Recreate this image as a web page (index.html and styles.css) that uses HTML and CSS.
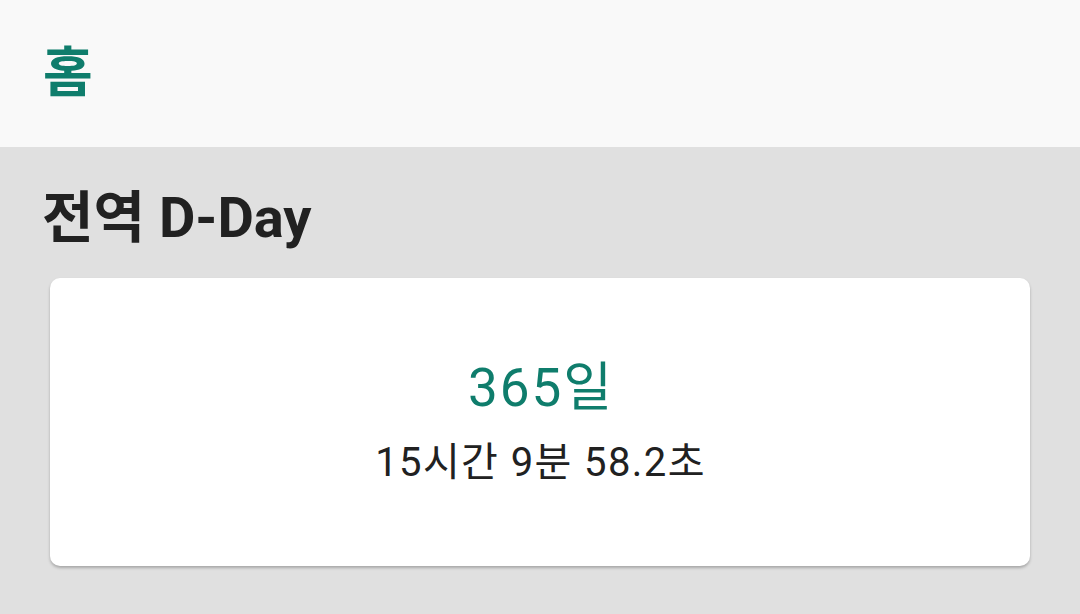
FILE: index.html
```html
<!DOCTYPE html>
<html lang="ko">
<head>
  <meta charset="UTF-8">
  <title>홈</title>
  <link rel="stylesheet" href="styles.css">
</head>
<body>
<header class="app-bar">
  <h1 class="app-bar-title">홈</h1>
</header>
<main class="content">
  <h2 class="section-title">전역 D-Day</h2>
  <section class="dday-card">
    <div class="dday-days">365일</div>
    <div class="dday-time">15시간 9분 58.2초</div>
  </section>
</main>
</body>
</html>
```

FILE: styles.css
```css
html {
    --accent-color: #0f7d6c;
    --text-color-main: #212121;
    --background-color-main: #e0e0e0;
    --app-bar-color: #f9f9f9;
}

body {
    margin: 0;
    height: 614px;
    overflow: hidden;
    background: var(--background-color-main);
    font-family: Roboto, "Noto Sans CJK KR", sans-serif;
    color: var(--text-color-main);
}

.app-bar {
    height: 147px;
    display: flex;
    align-items: center;
    padding-left: 43px;
    background: var(--app-bar-color);
}
.app-bar-title {
    margin: 0;
    font-size: 54px;
    font-weight: 700;
    line-height: 60px;
    color: var(--accent-color);
}

.content {
    padding: 38px 50px 0;
}
.section-title {
    margin: 0 0 26px -8px;
    font-size: 56px;
    font-weight: 700;
    line-height: 67px;
}

.dday-card {
    height: 288px;
    display: flex;
    flex-direction: column;
    align-items: center;
    justify-content: center;
    gap: 21px;
    background: #ffffff;
    border-radius: 10px;
    box-shadow: 0 2px 3px rgba(0, 0, 0, 0.25);
}
.dday-days {
    font-size: 53px;
    line-height: 60px;
    letter-spacing: 2px;
    margin-left: 2px;
    color: var(--accent-color);
}
.dday-time {
    font-size: 40px;
    line-height: 48px;
    letter-spacing: 1.4px;
    margin-left: 1px;
}
```
